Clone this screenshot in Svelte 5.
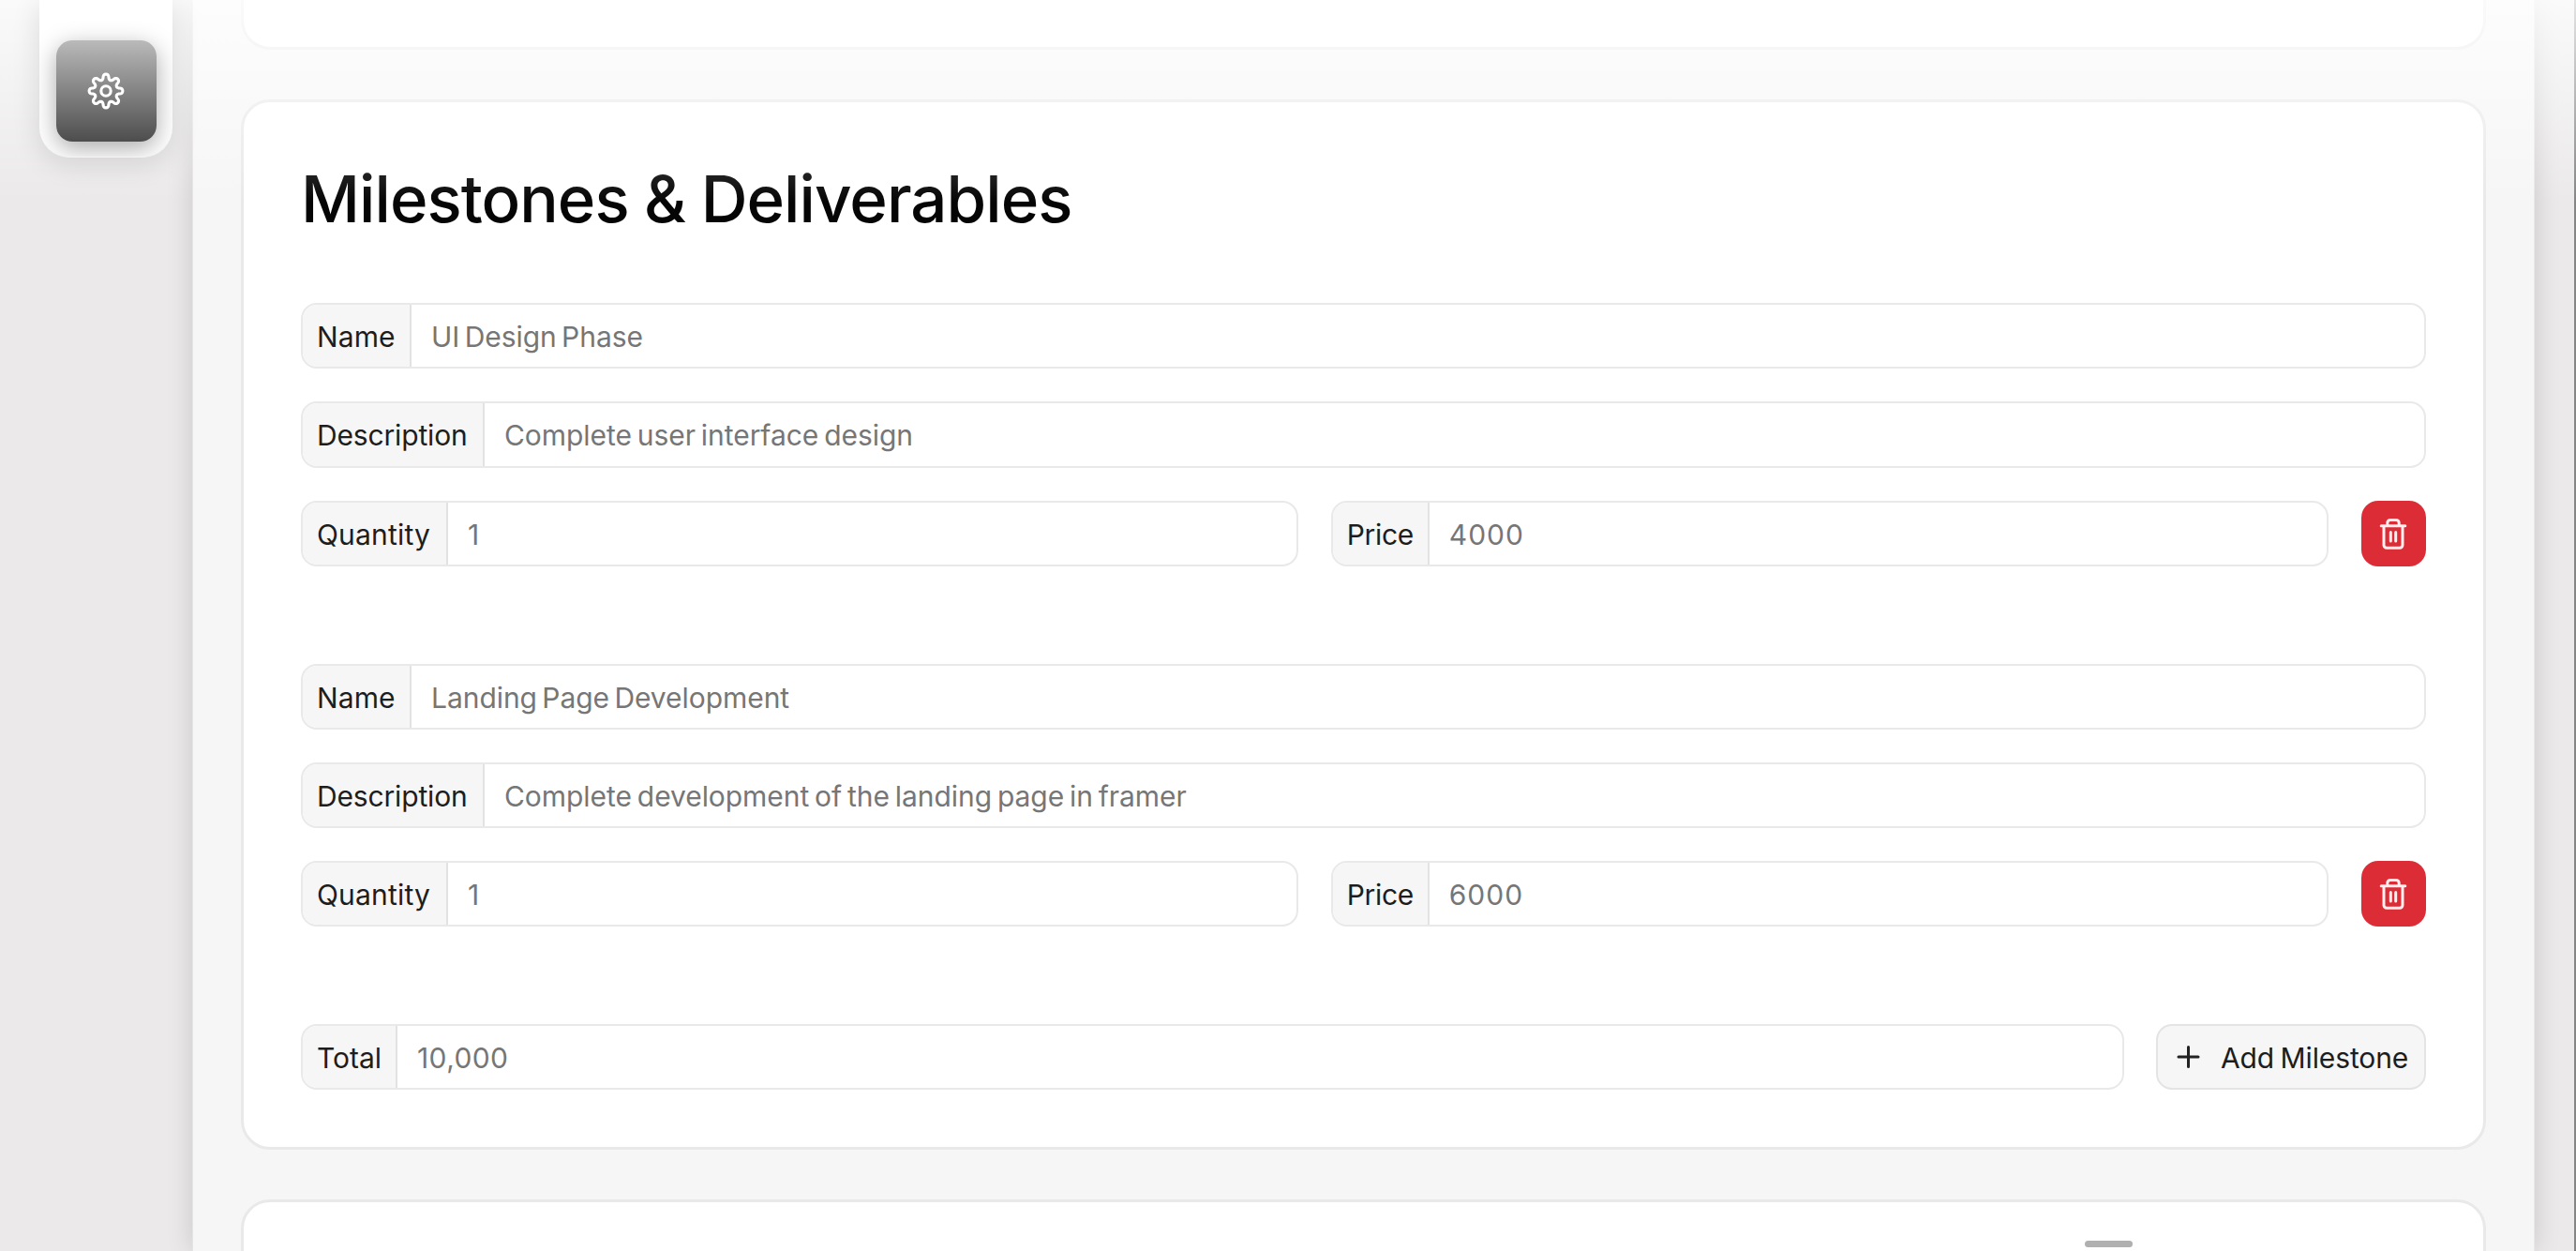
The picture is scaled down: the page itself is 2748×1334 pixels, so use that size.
<script>
  const milestones = [
    { name: 'UI Design Phase', description: 'Complete user interface design', quantity: '1', price: '4000' },
    { name: 'Landing Page Development', description: 'Complete development of the landing page in framer', quantity: '1', price: '6000' },
  ];

  // Eight rounded teeth traced around a circle
  const gear = Array.from({ length: 128 }, (_, i) => {
    const a = (i / 128) * Math.PI * 2;
    const r = 15.1 + 2.8 * Math.cos(8 * a);
    const t = a + 0.035 * Math.sin(16 * a);
    return `${i ? 'L' : 'M'}${(21 + r * Math.cos(t)).toFixed(2)} ${(21 + r * Math.sin(t)).toFixed(2)}`;
  }).join('') + 'Z';
</script>

{#snippet field(kind, label, value)}
  <div class="field {kind}">
    <span class="label">{label}</span>
    <span class="value">{value}</span>
  </div>
{/snippet}

<div class="app">
  <aside class="side">
    <div class="dock">
      <button class="settings" aria-label="Settings">
        <svg width="42" height="42" viewBox="0 0 42 42" fill="none" stroke="#fff" stroke-width="3.1" stroke-linejoin="round">
          <path d={gear} />
          <circle cx="21" cy="21" r="5.2" />
        </svg>
      </button>
    </div>
  </aside>

  <main class="panel">
    <section class="card previous"></section>

    <section class="card milestones">
      <h1>Milestones &amp; Deliverables</h1>
      {#each milestones as m}
        <div class="group">
          {@render field('name', 'Name', m.name)}
          {@render field('description', 'Description', m.description)}
          <div class="row">
            {@render field('quantity', 'Quantity', m.quantity)}
            {@render field('price', 'Price', m.price)}
            <button class="delete" aria-label="Delete milestone">
              <svg width="32" height="36" viewBox="0 0 32 36" fill="none" stroke="#fff" stroke-opacity="0.92" stroke-width="3" stroke-linecap="round" stroke-linejoin="round">
                <path d="M3.2 9.8h25.6M6 10v20.2a3 3 0 0 0 3 3h14a3 3 0 0 0 3-3V10M9.8 9V6.4a3 3 0 0 1 3-3h6.4a3 3 0 0 1 3 3V9" />
                <path d="M13.3 16.5v9.5M18.7 16.5v9.5" />
              </svg>
            </button>
          </div>
        </div>
      {/each}
      <div class="row">
        {@render field('total', 'Total', '10,000')}
        <button class="add">
          <svg width="26" height="26" viewBox="0 0 26 26" fill="none" stroke="#222" stroke-width="3" stroke-linecap="round">
            <path d="M12.5 2.5v21M2 13h21" />
          </svg>
          <span>Add Milestone</span>
        </button>
      </div>
    </section>

    <section class="card next"></section>
  </main>

  <div class="edge"></div>
  <div class="fade"></div>
  <div class="handle"></div>
</div>

<style>
  :global(body) { margin: 0; overflow: hidden; }
  .app {
    position: relative;
    display: grid;
    grid-template-columns: 205px 2499px 1fr;
    width: 2748px;
    height: 1334px;
    overflow: hidden;
    box-sizing: border-box;
    background: #ebe9ea;
    font-family: Inter, 'Liberation Sans', sans-serif;
    color: #1d1d1d;
  }
  .app * { box-sizing: border-box; }

  .side { position: relative; z-index: 3; padding-left: 42px; }
  .dock {
    display: flex;
    align-items: flex-end;
    justify-content: center;
    width: 142px;
    height: 168px;
    padding-bottom: 16px;
    border-radius: 0 0 32px 32px;
    background: #fff;
    border-bottom: 1px solid #f4f4f4;
    box-shadow: 0 6px 30px rgba(0, 0, 0, 0.12);
    overflow: hidden;
  }
  button { font: inherit; color: inherit; margin: 0; padding: 0; border: 0; }
  .settings {
    display: flex;
    align-items: center;
    justify-content: center;
    width: 107px;
    height: 108px;
    border-radius: 17px;
    background: linear-gradient(#bababa, #4d4d4d);
    box-shadow: 0 7px 26px rgba(0, 0, 0, 0.34);
  }

  .panel {
    position: relative;
    z-index: 1;
    display: flex;
    flex-direction: column;
    gap: 53px;
    height: 1334px;
    padding: 0 51px;
    background: #f6f6f6;
    border-left: 1px solid #e4e4e4;
    border-right: 1px solid #e8e8e8;
    box-shadow: 0 0 26px rgba(0, 0, 0, 0.15);
  }
  .card {
    flex: none;
    background: #fff;
    border: 3px solid #e9e9e9;
    border-radius: 31px;
  }
  .previous { height: 53px; border-top: 0; border-radius: 0 0 31px 31px; }
  .milestones { height: 1120px; padding: 0 61px; }
  .next { height: 120px; }

  h1 {
    height: 214px;
    margin: 0;
    padding-top: 63px;
    font-size: 69px;
    font-weight: 500;
    line-height: 80px;
    letter-spacing: -0.95px;
    word-spacing: -1px;
    color: #050505;
    white-space: nowrap;
  }
  .group { display: flex; flex-direction: column; gap: 35px; height: 384.6px; }
  .row { display: flex; gap: 34.5px; }
  .field {
    display: flex;
    flex: 1;
    height: 70.3px;
    border: 2px solid #e9e9e9;
    border-radius: 17px;
    overflow: hidden;
    font-size: 30px;
    white-space: nowrap;
  }
  .group > .field { flex: none; }
  .label {
    flex: none;
    width: 116px;
    padding-left: 15px;
    line-height: 69px;
    background: #f6f6f6;
    border-right: 2px solid #e2e2e2;
  }
  .value {
    padding-left: 21px;
    line-height: 69px;
    color: #767676;
    letter-spacing: -0.05px;
    word-spacing: -2.5px;
  }
  .name .label { letter-spacing: 0.1px; }
  .name .value { word-spacing: -3px; }
  .description .label { width: 194px; letter-spacing: -0.16px; }
  .quantity .label { width: 155px; letter-spacing: 0.18px; }
  .price .label { width: 103px; letter-spacing: -0.33px; }
  .price .value { letter-spacing: 1px; }
  .total .label { width: 101px; }
  .total .value { letter-spacing: 0.4px; }

  .delete {
    flex: none;
    display: flex;
    align-items: center;
    justify-content: center;
    width: 69.5px;
    height: 70px;
    border-radius: 18px;
    background: #dc2c36;
  }
  .add {
    flex: none;
    display: flex;
    align-items: center;
    gap: 21px;
    width: 288px;
    height: 70.3px;
    padding-left: 20px;
    border: 2px solid #e4e4e4;
    border-radius: 17px;
    background: #f6f6f6;
    font-size: 30px;
    letter-spacing: -0.1px;
    word-spacing: -2px;
    white-space: nowrap;
  }
  .add span { padding-top: 2px; }

  .edge { justify-self: end; width: 2px; background: #858585; }
  .fade {
    position: absolute;
    z-index: 2;
    inset: 0 0 auto;
    height: 216px;
    background: linear-gradient(rgba(255, 255, 255, 0.78), rgba(255, 255, 255, 0));
    pointer-events: none;
  }
  .handle {
    position: absolute;
    z-index: 4;
    left: 2224px;
    top: 1323px;
    width: 51px;
    height: 7px;
    border-radius: 4px;
    background: #b0b0b0;
  }
</style>
